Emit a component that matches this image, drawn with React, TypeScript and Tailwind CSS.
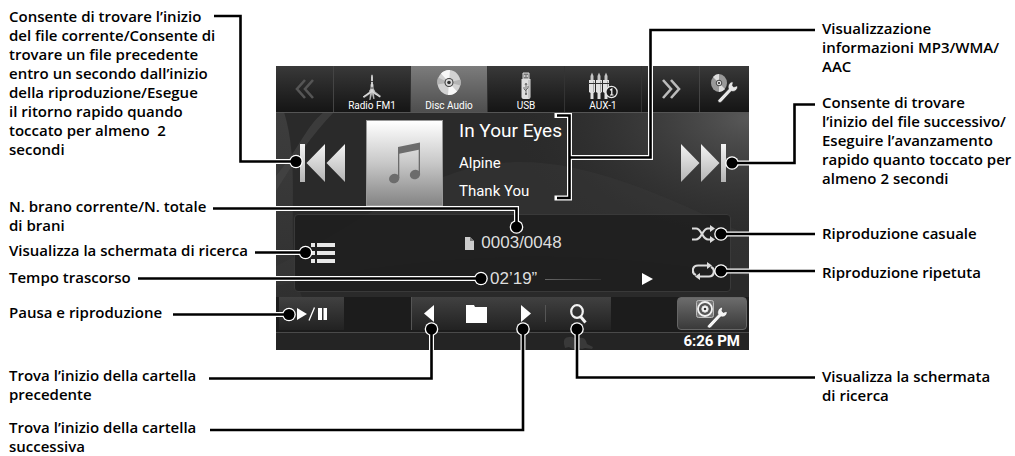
import React from "react";

type Label = { text: string; className: string };

const leftLabels: Label[] = [
  {
    text: "Consente di trovare l’inizio\ndel file corrente/Consente di\ntrovare un file precedente\nentro un secondo dall’inizio\ndella riproduzione/Esegue\nil ritorno rapido quando\ntoccato per almeno  2\nsecondi",
    className: "mt-[7px]",
  },
  { text: "N. brano corrente/N. totale\ndi brani", className: "mt-[38px]" },
  { text: "Visualizza la schermata di ricerca", className: "mt-1.5" },
  { text: "Tempo trascorso", className: "mt-2" },
  { text: "Pausa e riproduzione", className: "mt-4" },
  { text: "Trova l’inizio della cartella\nprecedente", className: "mt-11" },
  { text: "Trova l’inizio della cartella\nsuccessiva", className: "mt-[14px]" },
];

const rightLabels: Label[] = [
  { text: "Visualizzazione\ninformazioni MP3/WMA/\nAAC", className: "mt-[19px]" },
  {
    text: "Consente di trovare\nl’inizio del file successivo/\nEseguire l’avanzamento\nrapido quanto toccato per\nalmeno 2 secondi",
    className: "mt-[17px]",
  },
  { text: "Riproduzione casuale", className: "mt-9" },
  { text: "Riproduzione ripetuta", className: "mt-5" },
  { text: "Visualizza la schermata\ndi ricerca", className: "mt-[85px]" },
];

// callout lines, drawn twice: white halo first, black on top
const leaders = [
  "M214 16H240.5V161.5H296",
  "M213 208.5H516.5V227",
  "M255 252.5H305.5",
  "M138 278.5H481",
  "M173 314.5H289",
  "M209 378.5H431.5V329",
  "M210 430H523V329",
  "M815 377.5H577V329",
  "M815 30H650.5V157.5H569.5",
  "M557 115.5H569.5V198H557",
  "M815 104.5H794.5V163H732",
  "M815 234H721",
  "M815 271H721",
];

const dots = [
  [296, 161.5],
  [516.5, 227],
  [305.5, 252.5],
  [481, 278.5],
  [289, 314.5],
  [431.5, 329],
  [523, 329],
  [577, 329],
  [732, 163],
  [721, 234],
  [721, 271],
];

function Labels({ items }: { items: Label[] }) {
  return (
    <>
      {items.map((item, i) => (
        <p key={i} className={`whitespace-pre ${item.className}`}>
          {item.text}
        </p>
      ))}
    </>
  );
}

function Leaders() {
  return (
    <svg
      className="pointer-events-none absolute inset-0 h-full w-full"
      viewBox="0 0 1015 456"
      preserveAspectRatio="none"
      fill="none"
      aria-hidden="true"
    >
      {leaders.map((d) => (
        <path key={d} d={d} stroke="#fff" strokeWidth="5" strokeLinecap="square" />
      ))}
      {dots.map(([x, y]) => (
        <circle key={`${x}-${y}`} cx={x} cy={y} r="6.8" fill="#fff" />
      ))}
      {leaders.map((d) => (
        <path key={d} d={d} stroke="#000" strokeWidth="2.6" />
      ))}
      {dots.map(([x, y]) => (
        <circle key={`${x}-${y}`} cx={x} cy={y} r="5.5" fill="#000" />
      ))}
    </svg>
  );
}

/* ---------- icons ---------- */

function Chevrons({ flip, color }: { flip?: boolean; color: string }) {
  return (
    <svg width="20" height="20" viewBox="0 0 20 20" fill="none" stroke={color} strokeWidth="2.6">
      <path d={flip ? "M10 1L2 10l8 9M18 1l-8 9 8 9" : "M2 1l8 9-8 9M10 1l8 9-8 9"} />
    </svg>
  );
}

function TowerIcon() {
  return (
    <svg width="24" height="26" viewBox="0 0 24 26">
      <path d="M12 0l1 3v7l1.500 7L21 22l-1 1.500-6-3.500.5 5h-1.200L12 20l-1.500 6H9.300L10 20l-6 4-1-1.500 6.500-5L11 10V3z" fill="#b5b5b5" />
      <path d="M12 1v18M9 17h6M10.500 11h3M3 23l8-5M20 23l-7-5" stroke="#eee" strokeWidth=".8" fill="none" />
      <path d="M10.300 14h3.400M11 7.500h2" stroke="#222" strokeWidth=".8" />
    </svg>
  );
}

function DiscIcon() {
  return (
    <svg className="mb-1" width="24" height="27" viewBox="0 0 24 26">
      <ellipse cx="12" cy="13" rx="11.500" ry="12.500" fill="#d2d2d2" />
      <path d="M12 13L4 4A12 12.500 0 0 1 13 .5zM12 13l8 9a12 12.500 0 0 1-9 3.500z" fill="#f8f8f8" />
      <path d="M12 13L.5 15a11 12 0 0 1 .5-7zM12 13l11.500-3a12 12 0 0 1 0 6z" fill="#b4b4b4" />
      <circle cx="12" cy="13" r="4.500" fill="#444" />
      <circle cx="12" cy="13" r="3.400" fill="#ddd" />
      <circle cx="12" cy="13" r="1.800" fill="#333" />
    </svg>
  );
}

function UsbIcon() {
  return (
    <svg width="12" height="28" viewBox="0 0 12 28">
      <path d="M3 1h6v6H3z" fill="#777" stroke="#ddd" />
      <path d="M4.300 3h1v2h-1zM6.700 3h1v2h-1z" fill="#eee" />
      <path d="M1.500 7h9v18q0 2-2 2h-5q-2 0-2-2z" fill="#dedede" />
      <path d="M9 8v18" stroke="#aaa" />
      <path d="M6 12v10M6 19l-2-2v-2M6 18l2-2v-2M5 13l1-2 1 2" stroke="#555" strokeWidth=".8" fill="none" />
      <circle cx="6" cy="22" r="1" fill="#555" />
    </svg>
  );
}

function AuxIcon() {
  return (
    <svg width="30" height="28" viewBox="0 0 30 28">
      {[1, 8, 15].map((x) => (
        <g key={x}>
          <path d={`M${x + 1.5} 9V4l1.500-3.500L${x + 4.5} 4v5z`} fill="#c4c4c4" />
          <path d={`M${x} 8h6v12l-1.500 1v6h-3v-6L${x} 20z`} fill="#e2e2e2" />
          <path d={`M${x + 4.5} 9v11`} stroke="#999" strokeWidth=".8" />
        </g>
      ))}
      <path d="M0 11.500h22" stroke="#333" />
      <circle cx="23.500" cy="20" r="5.600" fill="#1c1c1c" stroke="#e8e8e8" strokeWidth="1.300" />
      <path d="M22 18.300l1.800-1.300v6M22 23h3.500" stroke="#fff" strokeWidth="1.200" fill="none" />
    </svg>
  );
}

// open jaw at the top right, handle running down to the left
const wrench =
  "M.6 21.500L10.500 11C9.600 8 10.800 5 14 3.800l1.200.6-.8 3 1.300 1.600 3-1 1 .9C19.300 12 16.500 14 13.300 13.300L3.400 24Q1.800 25.200.4 24T.6 21.500z";

function SettingsDiscIcon() {
  return (
    <svg width="30" height="32" viewBox="0 0 30 32">
      <ellipse cx="9" cy="10" rx="8" ry="9" fill="#999" />
      <path d="M9 10L3 4a8 9 0 0 1 6-3zM9 10l6 6a8 9 0 0 1-6 3z" fill="#dedede" />
      <circle cx="9" cy="10" r="2.800" fill="#ddd" stroke="#444" />
      <circle cx="9" cy="10" r="1" fill="#222" />
      <path d={wrench} transform="translate(8 5)" fill="#e6e6e6" stroke="#222" strokeWidth=".6" />
    </svg>
  );
}

function SpeakerIcon() {
  return (
    <svg width="34" height="30" viewBox="0 0 34 30">
      <rect x="1.500" y="1.500" width="17" height="17" rx="2" fill="#777" stroke="#bbb" strokeWidth="1" />
      <circle cx="10" cy="10" r="7" fill="#555" stroke="#f2f2f2" strokeWidth="1.800" />
      <circle cx="10" cy="10" r="3.200" fill="#fff" stroke="#ddd" />
      <circle cx="10" cy="10" r="1.300" fill="#333" />
      <path d={wrench} transform="translate(12.500 4.500)" fill="#f5f5f5" stroke="#333" strokeWidth=".6" />
    </svg>
  );
}

function SkipIcon({ next }: { next?: boolean }) {
  const id = next ? "skip-next" : "skip-prev";
  return (
    <svg width="45" height="38" viewBox="0 0 45 38">
      <defs>
        <linearGradient id={id} x1="0" y1="0" x2="0" y2="1">
          <stop offset="0" stopColor="#f4f4f4" />
          <stop offset="1" stopColor="#b4b4b4" />
        </linearGradient>
      </defs>
      <path
        d={next ? "M0 0v38l18.500-19zM20 0v38l18.500-19zM40 0h5v38h-5z" : "M0 0h5v38H0zM25 0v38L6.500 19zM45 0v38L26.500 19z"}
        fill={`url(#${id})`}
      />
    </svg>
  );
}

function NoteIcon() {
  return (
    <svg width="32" height="42" viewBox="0 0 32 42" fill="#6c6c6c">
      <path d="M9 5l22-4.500v7L9 12z" />
      <path d="M9 6h1.300v30H9zM29.700 2H31v30h-1.300z" />
      <ellipse cx="5.200" cy="36.500" rx="5.200" ry="4.600" transform="rotate(-25 5.200 36.500)" />
      <ellipse cx="26" cy="32.500" rx="5.200" ry="4.600" transform="rotate(-25 26 32.500)" />
    </svg>
  );
}

function ShuffleIcon() {
  return (
    <svg width="24" height="18" viewBox="0 0 24 18" fill="none" stroke="#dcdcdc" strokeWidth="2">
      <path d="M0 3.500h4c3 0 4.500 3 6 5.500s3 5.500 6 5.500h3" />
      <path d="M0 14.500h4c3 0 4.500-3 6-5.500s3-5.500 6-5.500h3" />
      <path d="M18 0l5 3.500L18 7zM18 11l5 3.500-5 3.500z" fill="#dcdcdc" stroke="none" />
    </svg>
  );
}

function RepeatIcon() {
  return (
    <svg width="24" height="18" viewBox="0 0 24 18" fill="none" stroke="#dcdcdc" strokeWidth="2.200">
      <path d="M4 13C-1 11 0 3.500 6 3.500h10" />
      <path d="M19 5c4.500 2 3.500 9.500-2 9.500H7" />
      <path d="M15 0l5 3.500L15 7zM8 11l-5 3.500L8 18z" fill="#dcdcdc" stroke="none" />
    </svg>
  );
}

function Triangle({ left }: { left?: boolean }) {
  return (
    <svg width="10" height="17" viewBox="0 0 10 17" fill="#fff">
      <path d={left ? "M10 0v17L0 8.500z" : "M0 0v17l10-8.500z"} />
    </svg>
  );
}

/* ---------- head unit screen ---------- */

function SourceTab({ label, active, children }: { label: string; active?: boolean; children: React.ReactNode }) {
  return (
    <button
      className={`flex flex-col items-center justify-end border-r border-[#333] text-[10px] leading-[12px] text-white ${
        active ? "bg-linear-to-b from-[#7c7c7c] to-[#4e4e4e]" : ""
      }`}
    >
      {children}
      <span className="whitespace-nowrap">{label}</span>
    </button>
  );
}

function Screen() {
  return (
    <section className="relative isolate overflow-hidden bg-[#2a2a2a] font-[Roboto,sans-serif] text-white">
      {/* wallpaper */}
      <svg className="absolute inset-0 -z-10 h-full w-full" viewBox="0 0 473 284" preserveAspectRatio="none" aria-hidden="true">
        <defs>
          <radialGradient id="glow" cx="1" cy=".18" r=".5">
            <stop offset="0" stopColor="#595959" />
            <stop offset="1" stopColor="#2e2e2e" stopOpacity="0" />
          </radialGradient>
          <linearGradient id="sweep" x1="0" y1="0" x2="0" y2="1">
            <stop offset="0" stopColor="#4a4a4a" />
            <stop offset="1" stopColor="#333" />
          </linearGradient>
        </defs>
        <path d="M0 0h473v284H0z" fill="url(#glow)" />
        <path d="M8 46C28 110 4 190 30 240H0V46z" fill="url(#sweep)" opacity=".6" />
        <path d="M0 110C25 80 30 60 48 46h10C35 70 22 90 0 125z" fill="#484848" opacity=".6" />
        <path d="M170 110C260 75 350 110 473 170V210C360 190 200 175 0 220V200C80 160 110 130 170 110z" fill="#3c3c3c" opacity=".35" />
      </svg>

      {/* sources */}
      <nav className="grid h-[47px] grid-cols-[58fr_77fr_77fr_77fr_77fr_58fr_49fr] border-b border-[#555] bg-linear-to-b from-[#393939] to-[#151515]">
        <button className="flex items-center justify-center border-r border-[#444]" aria-label="Sorgenti precedenti">
          <Chevrons flip color="#555" />
        </button>
        <SourceTab label="Radio FM1">
          <TowerIcon />
        </SourceTab>
        <SourceTab label="Disc Audio" active>
          <DiscIcon />
        </SourceTab>
        <SourceTab label="USB">
          <UsbIcon />
        </SourceTab>
        <SourceTab label="AUX-1">
          <AuxIcon />
        </SourceTab>
        <button className="flex items-center justify-center border-r border-[#444]" aria-label="Sorgenti successive">
          <Chevrons color="#bbb" />
        </button>
        <button className="flex items-center justify-center" aria-label="Impostazioni sorgente">
          <SettingsDiscIcon />
        </button>
      </nav>

      {/* track */}
      <div className="flex pt-[7px] pr-[23px] pl-6">
        <button aria-label="Brano precedente">
          <SkipIcon />
        </button>
        <div className="ml-[21px] flex h-[86px] w-[77px] items-center justify-center border border-[#999] bg-linear-to-b from-white via-[#c8c8c8] to-[#858585]">
          <NoteIcon />
        </div>
        <div className="ml-4 flex-1 whitespace-nowrap">
          <h1 className="mb-[7px] text-[19px] leading-[22px]">In Your Eyes</h1>
          <p className="text-[15px] leading-[28px]">Alpine</p>
          <p className="text-[15px] leading-[28px]">Thank You</p>
        </div>
        <button aria-label="Brano successivo">
          <SkipIcon next />
        </button>
      </div>

      {/* playback info */}
      <div className="mx-[18px] mt-2 flex h-[78px] rounded border border-[#393939] bg-[#1d1d1d]/80 pr-[14px] pl-4">
        <button aria-label="Elenco">
          <svg width="24" height="22" viewBox="0 0 24 22" fill="#e8e8e8">
            <path d="M0 1h4v4H0zM6 1h18v4H6zM0 9h4v4H0zM6 9h18v4H6zM0 17h4v4H0zM6 17h18v4H6z" />
          </svg>
        </button>
        <div className="flex flex-1 flex-col gap-4 pt-[18px] font-['Liberation_Sans',sans-serif] text-[17px] leading-[20px] text-[#dedede]">
          <div className="flex items-center justify-center gap-[7px]">
            <svg width="9" height="13" viewBox="0 0 9 13">
              <path d="M0 0h5l4 4v9H0z" fill="#ccc" />
              <path d="M5 0l4 4H5z" fill="#777" />
            </svg>
            <span>0003/0048</span>
          </div>
          <div className="flex items-center pr-[39px] pl-[155px]">
            <span>02’19”</span>
            <span className="ml-2 h-px w-14 bg-linear-to-r from-[#666] to-[#333]" />
            <svg className="ml-auto" width="11" height="12" viewBox="0 0 11 12">
              <path d="M0 0v12l11-6z" fill="#fff" />
            </svg>
          </div>
        </div>
        <div className="flex flex-col gap-[19px] pt-[10px]">
          <button aria-label="Riproduzione casuale">
            <ShuffleIcon />
          </button>
          <button aria-label="Riproduzione ripetuta">
            <RepeatIcon />
          </button>
        </div>
      </div>

      {/* toolbar */}
      <div className="mt-[5px] flex h-9 border-b border-[#4a4a4a] bg-[#1c1c1c] pr-[2px] pb-[2px] pl-[3px]">
        <button
          className="flex w-[65px] items-center bg-linear-to-b from-[#414141] to-[#222] pl-[18px]"
          aria-label="Riproduzione/Pausa"
        >
          <svg width="30" height="14" viewBox="0 0 30 14" fill="#fff">
            <path d="M0 1v12l10-6zM21 1h4v12h-4zM26.500 1h3.500v12h-3.500z" />
            <path d="M12 13.500L17.500.5" stroke="#fff" strokeWidth="1.300" />
          </svg>
        </button>
        <span className="flex-1" />
        <div className="flex w-[200px] border-l border-[#555] bg-linear-to-b from-[#414141] to-[#222]">
          <button className="flex w-[35px] items-center justify-center" aria-label="Cartella precedente">
            <Triangle left />
          </button>
          <span className="flex flex-1 items-center justify-center">
            <svg width="21" height="18" viewBox="0 0 21 18" fill="#fff">
              <path d="M0 0h8l1 2h12v16H0z" />
            </svg>
          </span>
          <button className="flex w-[38px] items-center justify-center" aria-label="Cartella successiva">
            <Triangle />
          </button>
          <button className="my-2 flex w-[66px] items-center justify-center border-l border-[#555]" aria-label="Ricerca">
            <svg width="18" height="20" viewBox="0 0 18 20" fill="none" stroke="#f2f2f2">
              <ellipse cx="8" cy="7.500" rx="5.800" ry="6.300" strokeWidth="2.200" />
              <path d="M11.500 12.500l5 6" strokeWidth="3" />
            </svg>
          </button>
        </div>
        <span className="flex-1" />
        <button
          className="flex w-[70px] items-center justify-center rounded-sm border border-[#666] bg-linear-to-b from-[#6c6c6c] to-[#3a3a3a]"
          aria-label="Impostazioni audio"
        >
          <SpeakerIcon />
        </button>
      </div>

      {/* status */}
      <div className="flex h-[17px] items-center bg-[#242424] pr-[9px]">
        <svg className="ml-auto" width="30" height="14" viewBox="0 0 30 14" fill="#393939">
          <path d="M1 9Q0 2 6 2q3-1 5 1 3-2 6 0 4-1 6 3l1 3 6 3-1 2-7-1-3 1-4-1-5 1-4-2-4 1z" />
        </svg>
        <time className="ml-[90px] text-[15px] leading-[17px] font-bold">6:26 PM</time>
      </div>
    </section>
  );
}

export default function App() {
  return (
    <main className="relative min-h-screen overflow-hidden bg-white font-['Open_Sans',sans-serif] text-[15px] leading-[19px] font-semibold text-black">
      <div className="-mb-1 grid grid-cols-[267px_minmax(0,1fr)_193px] pl-[9px]">
        <div>
          <Labels items={leftLabels} />
        </div>
        <div className="pt-[66px] pr-[73px] font-normal">
          <Screen />
        </div>
        <div>
          <Labels items={rightLabels} />
        </div>
      </div>
      <Leaders />
    </main>
  );
}
